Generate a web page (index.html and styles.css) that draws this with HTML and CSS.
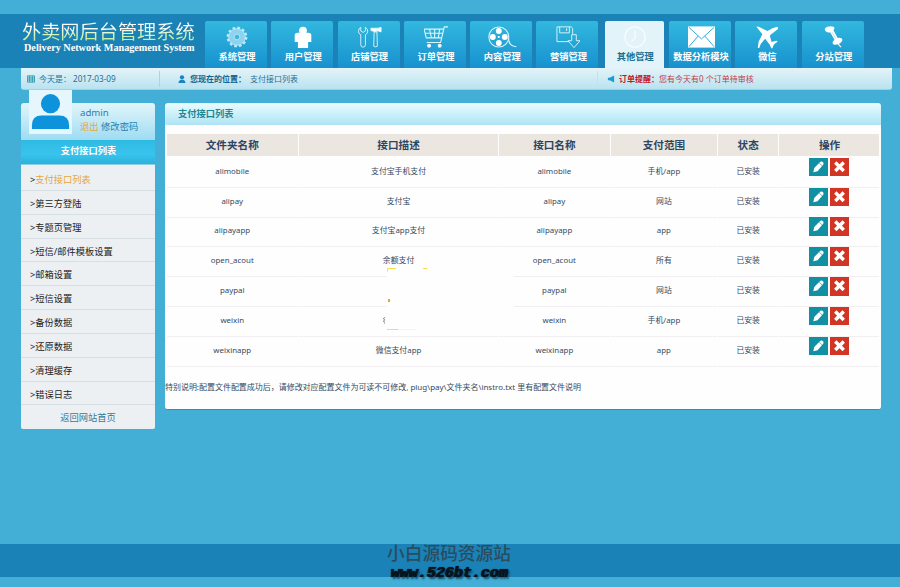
FILE: index.html
```
<!doctype html>
<html lang="zh-CN">
  <head>
    <meta charset="UTF-8" />
    <title>外卖网后台管理系统</title>
    <link rel="stylesheet" href="styles.css">
  </head>
  <body>
    <div class="header">
      <div class="logo">
        <div class="logo-cn">外卖网后台管理系统</div>
        <div class="logo-en">Delivery Network Management System</div>
      </div>
      <div class="nav">
        <a class="tab">
          <svg viewBox="0 0 26 26"><circle cx="13" cy="13" r="10" fill="none" stroke="#b9e8f7" stroke-width="2.6" stroke-dasharray="3 2.24"/><circle cx="13" cy="13" r="9" fill="#8bd3ee" stroke="#d5f2fa" stroke-width=".8"/><circle cx="13" cy="13" r="3" fill="#42b4de" stroke="#d5f2fa" stroke-width=".7"/></svg>
          <span>系统管理</span>
        </a>
        <a class="tab">
          <svg viewBox="0 0 26 26"><circle cx="13" cy="6" r="4.200" fill="#fff"/><path d="M7 8.500h12q3 0 3 3v7h-3.500V25h-11v-6.500H4v-7q0-3 3-3z" fill="#fff"/></svg>
          <span>用户管理</span>
        </a>
        <a class="tab">
          <svg viewBox="0 0 26 26" fill="none" stroke="#dcf5fb" stroke-width="1"><path d="M3 2.500v4l2.500 1.500L8 6.500v-4q3 1.500 2.500 5Q10 9.500 8 10.500v11q0 2.500-2.500 2.500T3 21.500v-11Q.5 9.500.5 7 .5 3.500 3 2.500z"/><path d="M14 3.500h8l3-1v5l-3-1h-1.500l-1 .5h-2L14 6z" fill="#fff"/><path d="M17.500 7.500h3L21 23q-2 1.500-4 0z"/></svg>
          <span>店铺管理</span>
        </a>
        <a class="tab">
          <svg viewBox="0 0 26 26" fill="none" stroke="#dcf5fb" stroke-width="1.200"><path d="M26 2h-4l-4 17H3M22 4.500H0l2.500 9.500h17M1 9h20M6 4.500 8 14M11.500 4.500V14M17 4.500 15.500 14"/><circle cx="5.500" cy="22.500" r="1.600" fill="#fff"/><circle cx="17" cy="22.500" r="1.600" fill="#fff"/></svg>
          <span>订单管理</span>
        </a>
        <a class="tab">
          <svg class="wide" viewBox="0 0 32 26"><circle cx="12" cy="13" r="10.800" fill="none" stroke="#dcf5fb" stroke-width="1.200"/><g fill="#fff"><circle cx="12" cy="6.500" r="3.200"/><circle cx="12" cy="19.500" r="3.200"/><circle cx="5.500" cy="13" r="3.200"/><circle cx="18.500" cy="13" r="3.200"/><circle cx="12" cy="13" r="1.200"/></g><path d="M22.500 14q0 9 8.500 9.500" fill="none" stroke="#dcf5fb" stroke-width="1.200"/></svg>
          <span>内容管理</span>
        </a>
        <a class="tab">
          <svg viewBox="0 0 26 26" fill="none" stroke="#dcf5fb" stroke-width="1"><path d="M14 18H1V2h15.500l1.500 1.500V10M4 2v6.500h10.500V2M11.500 3.500v3"/><path d="M17 10.500h5V17h4l-6.500 7.500L13 17h4z"/></svg>
          <span>营销管理</span>
        </a>
        <a class="tab active">
          <svg viewBox="0 0 26 26" fill="none" stroke="#f7fcfe" stroke-width="1.400"><circle cx="13" cy="13" r="11"/><path d="M13 6v8l-4 4"/></svg>
          <span>其他管理</span>
        </a>
        <a class="tab">
          <svg class="mail" viewBox="0 0 28 24"><path d="M0 1h28v22H0z" fill="#fff"/><path d="M1 2l13 12L27 2M1 22l9.500-11M27 22l-9.500-11" fill="none" stroke="#2da9d8" stroke-width="1"/></svg>
          <span>数据分析模块</span>
        </a>
        <a class="tab">
          <svg viewBox="0 0 26 26"><path d="M1.500 2q1-1 2.500 0l9.500 4.500L19 3.500 24 2q2 .5.500 2.500L16 11.500l2 7 5-1.500q2 0 1 1.500L20.500 21 19 25q-1 1-1.500 0L16 21.500 11 15 6.500 20 4.500 25H3l1-7 4-8z" fill="#fff"/></svg>
          <span>微信</span>
        </a>
        <a class="tab">
          <svg viewBox="0 0 26 26"><path d="M3 5q0-3 5-3.500 5.500-.3 5.500 2L12.500 6l4.500 8q4-1 5 1.500.5 3-4 5-5 2-6.500-.5-.5-2 2-4L9 8Q3.500 8.500 3 5z" fill="#fff"/><path d="M17 20l3.500 4" stroke="#fff" stroke-width="1.200"/><path d="M11 8l4 7" stroke="#a5dcf0" stroke-width=".8"/></svg>
          <span>分站管理</span>
        </a>
      </div>
    </div>

    <div class="info-bar">
      <div class="info-date">
        <svg viewBox="0 0 9 9" fill="none" stroke="#2b93ad"><path d="M.5 1h8v7h-8zM3 1v7M6 1v7M1 3.300h7M1 5.600h7"/></svg>
        <span>今天是：</span><span>2017-03-09</span>
      </div>
      <div class="info-place">
        <svg viewBox="0 0 9 9" fill="#1785c4"><circle cx="4.500" cy="2.600" r="2.400"/><path d="M.5 9q0-3 2.500-3.700h3Q8.500 6 8.500 9z"/></svg>
        <b>您现在的位置：</b><span>支付接口列表</span>
      </div>
      <div class="info-order">
        <svg viewBox="0 0 9 9" fill="#1b9ad6"><path d="M1 3h2l5-2.500v8L3 6H1z"/></svg>
        <b>订单提醒：</b><span>您有今天有0 个订单待审核</span>
      </div>
    </div>

    <div class="main">
      <div class="sidebar">
        <div class="user">
          <div class="avatar">
            <svg viewBox="0 0 44 44" fill="#0c93dc"><circle cx="22" cy="14" r="9.800"/><path d="M3 40v-4q0-10 10-10h18q10 0 10 10v4z"/></svg>
          </div>
          <div class="user-info">
            <div class="user-name">admin</div>
            <div><a class="logout">退出</a> <a>修改密码</a></div>
          </div>
        </div>
        <div class="side-title">支付接口列表</div>
        <ul class="menu">
          <li class="current">&gt;<a>支付接口列表</a></li>
          <li>&gt;<a>第三方登陆</a></li>
          <li>&gt;<a>专题页管理</a></li>
          <li>&gt;<a>短信/邮件模板设置</a></li>
          <li>&gt;<a>邮箱设置</a></li>
          <li>&gt;<a>短信设置</a></li>
          <li>&gt;<a>备份数据</a></li>
          <li>&gt;<a>还原数据</a></li>
          <li>&gt;<a>清理缓存</a></li>
          <li>&gt;<a>错误日志</a></li>
          <li class="home"><a>返回网站首页</a></li>
        </ul>
      </div>

      <div class="panel">
        <div class="panel-title">支付接口列表</div>
        <div class="panel-body">
          <div class="table">
            <div class="row head"><div>文件夹名称</div><div>接口描述</div><div>接口名称</div><div>支付范围</div><div>状态</div><div>操作</div></div>
            <div class="row"><div>alimobile</div><div>支付宝手机支付</div><div>alimobile</div><div>手机/app</div><div>已安装</div><div class="ops"></div></div>
            <div class="row"><div>alipay</div><div>支付宝</div><div>alipay</div><div>网站</div><div>已安装</div><div class="ops"></div></div>
            <div class="row"><div>alipayapp</div><div>支付宝app支付</div><div>alipayapp</div><div>app</div><div>已安装</div><div class="ops"></div></div>
            <div class="row"><div>open_acout</div><div>余额支付</div><div>open_acout</div><div>所有</div><div>已安装</div><div class="ops"></div></div>
            <div class="row"><div>paypal</div><div></div><div>paypal</div><div>网站</div><div>已安装</div><div class="ops"></div></div>
            <div class="row"><div>weixin</div><div class="mark"><span>彳</span></div><div>weixin</div><div>手机/app</div><div>已安装</div><div class="ops"></div></div>
            <div class="row"><div>weixinapp</div><div>微信支付app</div><div>weixinapp</div><div>app</div><div>已安装</div><div class="ops"></div></div>
            <svg class="patch" viewBox="0 0 130 68"><path d="M3 5h128v62H3z" fill="#fefefe"/><path d="M3.500 4.500V1.500H12M39 1.500h4" fill="none" stroke="#f7dc50"/><path d="M4 32h2v3H4z" fill="#e2a92f"/><path d="M3 62.500h11" stroke="#f8e33d"/><path d="M14 62.500h18" stroke="#fdf8c8"/></svg>
          </div>
          <p class="note">特别说明:配置文件配置成功后，请修改对应配置文件为可读不可修改, plug\pay\文件夹名\instro.txt 里有配置文件说明</p>
        </div>
      </div>
    </div>

    <div class="footer">
      <div class="mark-cn">小白源码资源站</div>
      <div class="mark-url">www.526bt.com</div>
    </div>

    <script>
      // Edit and delete buttons of each row
      document.querySelectorAll('.ops').forEach(function (cell) {
        cell.innerHTML =
          '<a class="edit"><svg viewBox="0 0 19 19"><path d="M4 15l1-4.500L11.500 4q1.300-1 2.600.3t.4 2.700L8.500 14z" fill="#fff"/><path d="M10.500 5.500l3 3" stroke="#118fa3" stroke-width=".7"/></svg></a>' +
          '<a class="del"><svg viewBox="0 0 19 19"><path d="M6.300 6l6.400 6.400M12.700 6l-6.400 6.400" stroke="#fff" stroke-width="3.600" stroke-linecap="square"/></svg></a>';
      });
    </script>
  </body>
</html>
```
FILE: styles.css
```
* {
  box-sizing: border-box;
}
body {
  margin: 0;
  padding-top: 14px;
  height: 587px;
  display: flex;
  flex-direction: column;
  overflow: hidden;
  background: #43aed6;
  font-family: 'Noto Sans', 'Noto Sans CJK SC', sans-serif;
  font-size: 7.87px;
  color: #34495e;
}
svg {
  display: block;
}
.header {
  height: 54px;
  flex: none;
  display: flex;
  background: #1a82b6;
}
.logo {
  width: 205px;
  padding: 6px 0 0 22px;
  white-space: nowrap;
}
.logo-cn {
  font-size: 19.2px;
  line-height: 22px;
  font-family: 'Noto Sans CJK SC', sans-serif;
  background: linear-gradient(#fff 35%, #c9efa0 80%);
  -webkit-background-clip: text;
  color: transparent;
}
.logo-en {
  padding-left: 2px;
  font: bold 10.2px/12px 'Liberation Serif', serif;
  color: #fff;
}
.nav {
  display: flex;
  gap: 4.3px;
  padding-top: 7px;
}
.tab {
  width: 62px;
  height: 47px;
  padding-left: 2px;
  display: flex;
  flex-direction: column;
  align-items: center;
  border-radius: 2px 2px 0 0;
  background: linear-gradient(#32b8de, #1791cf);
  color: #fff;
  font-size: 9.25px;
  font-weight: bold;
  white-space: nowrap;
}
.tab svg {
  width: 24px;
  height: 24px;
  margin-top: 4px;
}
.tab .wide {
  width: 31px;
}
.tab .mail {
  width: 27px;
}
.tab span {
  line-height: 15px;
}
.tab.active {
  width: 59px;
  margin: 0 1px 0 2px;
  background: #e2f3fa;
  color: #21708f;
}
.info-bar {
  width: 871px;
  height: 22px;
  flex: none;
  margin-left: 21px;
  display: flex;
  align-items: center;
  border-radius: 0 0 3px 3px;
  border-bottom: 1px solid #93d5eb;
  background: linear-gradient(#e4f3f8, #b9e3f0);
  color: #2a6e96;
  font-size: 8px;
  white-space: nowrap;
}
.info-bar > div {
  display: flex;
  align-items: center;
  height: 16px;
}
.info-bar svg {
  width: 8px;
  height: 8px;
  margin-right: 4px;
}
.info-date {
  width: 139px;
  padding-left: 6px;
  border-right: 1px solid #a9d5e3;
}
.info-date span + span {
  margin-left: 2px;
  font-size: 8.2px;
}
.info-place {
  width: 438px;
  padding-left: 18px;
  border-right: 1px solid #c3e2eb;
}
.info-place b {
  margin-right: 4px;
  color: #12618d;
}
.info-order {
  padding-left: 9px;
  color: #c43a48;
}
.info-order b {
  color: #c31727;
}
.main {
  display: flex;
  align-items: flex-start;
  gap: 10px;
  margin: 13px 0 0 21px;
  height: 441px;
}
.sidebar {
  width: 134px;
}
.user {
  height: 37px;
  display: flex;
  border-radius: 3px 3px 0 0;
  background: linear-gradient(#e2f5fa, #9edcf2);
  color: #2980ad;
  font-size: 9.3px;
}
.avatar {
  width: 43px;
  height: 44px;
  margin: -13px 8px 0 8px;
  background: #e5f6fd;
}
.user-info {
  padding-top: 3px;
  line-height: 14px;
  white-space: nowrap;
}
.user-name {
  font-size: 9.6px;
}
.logout {
  color: #e9a83b;
}
.side-title {
  height: 24px;
  line-height: 22px;
  padding-left: 1px;
  background: linear-gradient(#2fbae3, #38c4ec 60%, #2bb0dc);
  color: #fff;
  font-size: 9.25px;
  font-weight: bold;
  text-align: center;
}
.menu {
  list-style: none;
  margin: 0;
  padding: 2px 0 0;
  border-top: 1px solid #8fcfe3;
  border-radius: 0 0 2px 2px;
  background: #ecf0f2;
  color: #222;
  font-size: 9.25px;
}
.menu li {
  height: 23.85px;
  line-height: 25px;
  padding-left: 9px;
  border-bottom: 1px solid #d5dfe4;
}
.menu .current a {
  color: #e5a73c;
}
.menu .home {
  padding: 0;
  text-align: center;
  border: 0;
  color: #317c9c;
}
.panel {
  width: 716px;
}
.panel-title {
  height: 22px;
  padding-left: 13px;
  line-height: 21px;
  border-radius: 3px 3px 0 0;
  background: linear-gradient(#e9fcff, #aee4f4);
  color: #1b8797;
  font-size: 9.25px;
  font-weight: bold;
}
.panel-body {
  height: 285px;
  padding-top: 9px;
  border-radius: 0 0 3px 3px;
  border-bottom: 1px solid #338fb0;
  background: #fefefe;
}
.table {
  position: relative;
  padding: 0 1.5px;
}
.row {
  display: grid;
  grid-template-columns: 131.5px 198.5px 110.5px 106px 60px 100px;
  column-gap: 1.3px;
  height: 29.83px;
  text-align: center;
  line-height: 32px;
}
.row > div {
  border-bottom: 1px solid #f2eff3;
}
.row.head {
  height: 21.5px;
  line-height: 22px;
  margin-bottom: -.8px;
  color: #2c4563;
  font-size: 10.6px;
  font-weight: bold;
}
.row.head > div {
  background: #ebe6df;
  border: 0;
}
.mark span {
  display: block;
  width: 8px;
  margin-left: 83px;
  transform: scaleX(.55);
  transform-origin: left;
}
.patch {
  position: absolute;
  left: 219px;
  top: 133px;
  width: 130px;
  height: 68px;
}
.ops {
  display: flex;
  justify-content: center;
  gap: 2px;
  padding-top: 3px;
}
.ops a {
  width: 19px;
  height: 18.5px;
}
.ops svg {
  width: 19px;
  height: 18px;
}
.edit {
  background: #118fa3;
}
.del {
  background: #d33524;
}
.note {
  margin: 16px 0 0;
  font-size: 7.98px;
  line-height: 14px;
  white-space: nowrap;
}
.footer {
  height: 33px;
  flex: none;
  padding-right: 2px;
  background: #1a82b6;
  text-align: center;
}
.mark-cn {
  font-size: 17.7px;
  line-height: 17px;
  font-family: 'Noto Sans CJK SC', sans-serif;
  font-weight: 500;
  color: #2a4c5f;
}
.mark-url {
  padding-top: 4px;
  font: italic bold 15px/18px 'Liberation Mono', monospace;
  color: #06141c;
  text-shadow: 0 0 1px #06141c, 1px 0 0 #06141c, 2px 2px 2px #0b415d;
}
```
